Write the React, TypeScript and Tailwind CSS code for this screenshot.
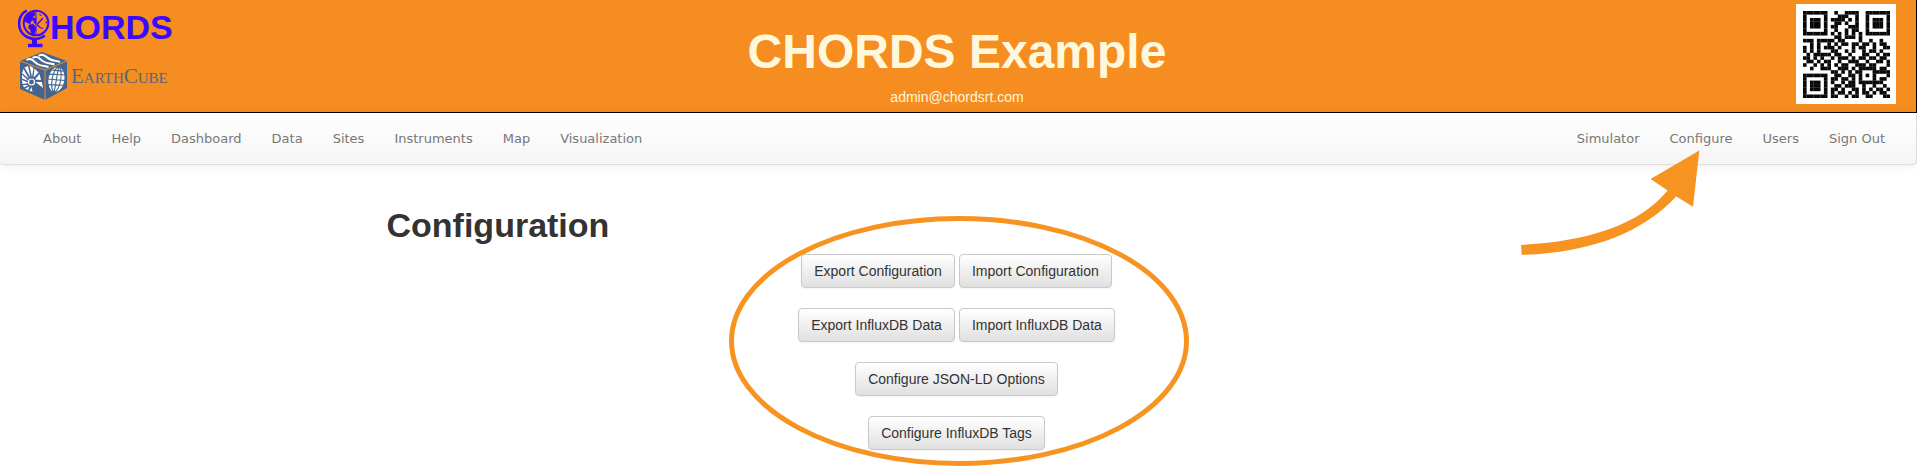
const LEFT_LINKS = ["About", "Help", "Dashboard", "Data", "Sites", "Instruments", "Map", "Visualization"];
const RIGHT_LINKS = ["Simulator", "Configure", "Users", "Sign Out"];

const BUTTON_ROWS = [
  ["Export Configuration", "Import Configuration"],
  ["Export InfluxDB Data", "Import InfluxDB Data"],
  ["Configure JSON-LD Options"],
  ["Configure InfluxDB Tags"],
];

const QR_ROWS = [
  "1111111001001111001111111",
  "1000001000111001001000001",
  "1011101011110101001011101",
  "1011101001101001001011101",
  "1011101011000111001011101",
  "1000001001001011001000001",
  "1111111010101010101111111",
  "0000000001101110100000000",
  "1110111110110000100100100",
  "0010100101011011011010110",
  "1010101110100010110010011",
  "1010100011001010010110100",
  "0101111101100100011001011",
  "1101010010111010110110110",
  "0110101100100111001001101",
  "1001010101011001110110001",
  "0010011100111010111110110",
  "0000000011010101100011111",
  "1111111001100110101010001",
  "1000001011011010100010110",
  "1011101010010110111111100",
  "1011101001101110010010010",
  "1011101011010011010101101",
  "1000001010110101011010110",
  "1111111011001011001100011",
];

function Globe() {
  return (
    <svg viewBox="0 0 32 39" className="h-[39px] w-8 shrink-0" fill="none" stroke="#3a08ff" aria-hidden="true">
      <circle cx="18" cy="14" r="12.3" strokeWidth="2" />
      <path d="M9 1.6C2.6 4.2-.4 12 1.9 19.6 4.4 27 12.4 31.3 20.6 29.6c2.600-.6 4.700-1.700 6.200-3" strokeWidth="2.6" />
      <path d="M18 2v24" strokeWidth="1" />
      <path d="M16.5 30v5" strokeWidth="5" />
      <path d="M10 36.500h14.500" strokeWidth="3.400" />
      <path
        d="M8 8l4-4 5-1-.5 4-2 .6 1.500 3-3 1.500-1 3-3-1.500-2.500-1zM11 16l4-1 2 2 1 3-2 6-2.500-1-1-4-2-2zM15.500 9h2.500v6l-2-1z"
        fill="#3a08ff"
        strokeWidth=".5"
      />
      <path d="M19 15.500l6-6.500M19 15.500l3 3 3 1M21.500 5.500l2 1M27.500 13.500h1.500M24 23l1 1" strokeWidth="1.300" />
    </svg>
  );
}

function Cube() {
  return (
    <svg viewBox="0 0 47 48" className="h-12 w-[47px] shrink-0" fill="none" aria-hidden="true">
      <path d="M22 0 47 9v27L25 48 0 37V9z" fill="#44658f" />
      <path d="M0 9l25 9L47 9M25 18v30" stroke="#f68d20" strokeWidth="1" />
      <g stroke="#fff" strokeWidth="2">
        <path d="M6.500 8c5-3 7 1.500 11 4s7 1.500 11 3" />
        <path d="M12.500 6c5-3 7 1 11 3.500s7 1.500 11 3" />
        <path d="M18.500 3.800c5-2.800 7 1 11 3.200s7 1.500 10.500 3" />
      </g>
      <g fill="#fff">
        <path d="M9 31 2 28l.5 4zM8.500 29 2 22.500v4zM9 27 3.500 17 2 21zM10.500 25.500 8 14l-3.500 1.500zM12 25l1.500-9-4-2.500zM13.500 25.500l5-5-4-4zM15 27.500l6 .5-1.500-6zM15.500 30l7.500 6-1-6zM8.500 33 4 35.500 3 33zM9.500 34.500 8 38l-3-1.500zM11.500 35l1 4.500-3-.5z" />
      </g>
      <circle cx="11.500" cy="30" r="3" stroke="#fff" strokeWidth="1.200" />
      <g transform="rotate(10 36.500 27)">
        <ellipse cx="36.500" cy="27.500" rx="8" ry="12.500" fill="#fff" />
        <g stroke="#44658f" strokeWidth="1.100">
          <path d="M36.500 15v25M28 23.500l17-2M28 28.500l17-1.500M29 34l15-2M31 19l11-1" />
          <ellipse cx="36.500" cy="27.500" rx="4.300" ry="12.500" />
        </g>
      </g>
    </svg>
  );
}

function QrCode() {
  return (
    <svg viewBox="0 0 25 25" className="size-[87px]" shapeRendering="geometricPrecision" role="img" aria-label="QR code">
      {QR_ROWS.flatMap((row, y) =>
        [...row].map((cell, x) =>
          cell === "1" ? <rect key={`${x}-${y}`} x={x} y={y} width="1.04" height="1.04" fill="#080808" /> : null,
        ),
      )}
    </svg>
  );
}

function NavLinks({ links }: { links: string[] }) {
  return (
    <ul className="flex">
      {links.map((label) => (
        <li key={label}>
          <a href="#" className="block px-[15px] pt-4 pb-[15px] text-[13px] leading-5 text-[#777] [text-shadow:0_1px_0_#fff]">
            {label}
          </a>
        </li>
      ))}
    </ul>
  );
}

export default function App() {
  return (
    <div className="bg-white font-['Liberation_Sans',Arial,sans-serif] text-[#333]">
      <header className="grid grid-cols-[1fr_auto_1fr] border-r border-b border-black bg-[#f68d20] pr-5 pb-[5px] pl-[18px]">
        <div className="flex flex-col gap-1 pt-[9px]">
          <div className="flex items-start">
            <Globe />
            <span className="text-[34px] leading-9 font-bold text-[#3a08ff]">HORDS</span>
          </div>
          <div className="flex items-center gap-1 pl-0.5">
            <Cube />
            <span className="font-['Liberation_Serif',serif] text-[21px] leading-6 text-[#53687f] [font-variant:small-caps]">
              EarthCube
            </span>
          </div>
        </div>
        <div className="flex flex-col items-center pt-6">
          <h1 className="text-5xl leading-[56px] font-bold text-[#fff8dc]">CHORDS Example</h1>
          <p className="mt-[7px] text-sm leading-5 text-[#fff8dc]">admin@chordsrt.com</p>
        </div>
        <div className="flex items-start justify-end pt-1">
          <div className="flex size-[100px] items-center justify-center bg-white">
            <QrCode />
          </div>
        </div>
      </header>

      <nav className="relative flex justify-between rounded border-r border-b border-[#dedede] bg-linear-to-b from-white to-[#f5f5f5] pr-4 pl-7 font-['DejaVu_Sans',Verdana,sans-serif] shadow-[0_1px_10px_rgba(0,0,0,0.08)]">
        <NavLinks links={LEFT_LINKS} />
        <NavLinks links={RIGHT_LINKS} />
        <svg
          viewBox="60 148 542 320"
          className="pointer-events-none absolute top-9 right-[215px] h-[107px] w-[181px]"
          aria-hidden="true"
        >
          <path d="M597 152 451 238l51 34C420 374 265 424 63 435l2 30C280 458 430 395 528 290l50 31z" fill="#f79421" />
        </svg>
      </nav>

      <main className="mx-auto max-w-[1144px] pr-1">
        <h2 className="pt-10 text-[34px] leading-10 font-bold">Configuration</h2>
        <div className="relative mx-auto mt-[9px] flex w-fit flex-col items-center gap-5 pb-[18px]">
          {BUTTON_ROWS.map((row) => (
            <div key={row[0]} className="flex gap-1">
              {row.map((label) => (
                <button
                  key={label}
                  type="button"
                  className="rounded border border-[#c9c9c9] bg-linear-to-b from-white to-[#e0e0e0] px-3 py-1.5 text-sm leading-5 text-[#333] shadow-[inset_0_1px_0_rgba(255,255,255,0.2),0_1px_2px_rgba(0,0,0,0.05)]"
                >
                  {label}
                </button>
              ))}
            </div>
          ))}
          <svg
            viewBox="0 0 466 250"
            className="pointer-events-none absolute -top-[38px] left-1/2 h-[250px] w-[466px] max-w-none -translate-x-1/2"
            aria-hidden="true"
          >
            <ellipse cx="236" cy="125" rx="227.500" ry="122.500" fill="none" stroke="#f79421" strokeWidth="5" />
          </svg>
        </div>
      </main>
    </div>
  );
}
